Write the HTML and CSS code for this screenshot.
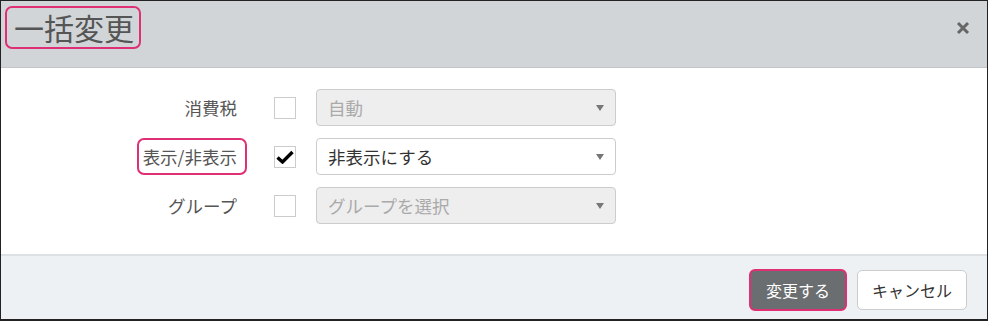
FILE: index.html
```html
<!DOCTYPE html>
<html lang="ja">
  <head>
    <meta charset="UTF-8" />
    <title>一括変更</title>
    <link rel="stylesheet" href="styles.css">
  </head>
  <body>
    <div class="modal">
      <div class="modal-header">
        <h1 class="modal-title mark">一括変更</h1>
        <span class="close">
          <svg width="14" height="14" viewBox="0 0 14 14"><path d="M2 2 L12 12 M12 2 L2 12" stroke="#666" stroke-width="3" fill="none"/></svg>
        </span>
      </div>

      <div class="modal-body">
        <div class="form-row">
          <div class="label"><span>消費税</span></div>
          <span class="check"></span>
          <div class="select disabled">自動<span class="arrow"></span></div>
        </div>

        <div class="form-row">
          <div class="label"><span class="mark">表示/非表示</span></div>
          <span class="check checked">
            <svg width="18" height="14" viewBox="0 0 18 14"><path d="M1.5 7.5 L6.5 12 L16.5 2" fill="none" stroke="#000" stroke-width="3.4" stroke-linejoin="miter"/></svg>
          </span>
          <div class="select">非表示にする<span class="arrow"></span></div>
        </div>

        <div class="form-row">
          <div class="label"><span>グループ</span></div>
          <span class="check"></span>
          <div class="select disabled">グループを選択<span class="arrow"></span></div>
        </div>
      </div>

      <div class="modal-footer">
        <button class="btn btn-primary mark">変更する</button>
        <button class="btn">キャンセル</button>
      </div>
    </div>
  </body>
</html>
```

FILE: styles.css
```css
html, body {
  margin: 0;
  padding: 0;
}

body {
  font-family: "Noto Sans CJK JP", "Noto Sans", sans-serif;
  color: #555;
}

.modal {
  width: 988px;
  height: 321px;
  box-sizing: border-box;
  border: 1px solid #222;
  border-bottom-width: 2px;
  display: flex;
  flex-direction: column;
}

.modal-header {
  height: 66px;
  background-color: #d1d5d8;
  border-bottom: 1px solid #c2c6ca;
  display: flex;
  align-items: flex-start;
  justify-content: space-between;
  padding: 0 17px 0 4px;
}

.modal-title {
  margin: 5px 0 0 0;
  font-size: 30px;
  font-weight: normal;
  line-height: 39px;
  padding: 0 5px 0 7px;
  color: #555;
}

.mark {
  border: 2px solid #df2f75;
  border-radius: 7px;
}

.close {
  margin-top: 20px;
  line-height: 0;
}

.modal-body {
  flex: 1;
  background: #fff;
  padding-top: 21px;
  display: flex;
  flex-direction: column;
  gap: 12px;
}

.form-row {
  display: flex;
  align-items: center;
  height: 37px;
}

.label {
  width: 236px;
  text-align: right;
  font-size: 17.5px;
}

.label span {
  display: inline-block;
  line-height: 33px;
}

.label span.mark {
  padding: 0 8px 0 4px;
  margin-right: -10px;
}

.check {
  width: 20px;
  height: 20px;
  border: 1px solid #ccc;
  margin-left: 37px;
  margin-right: 20px;
  display: flex;
  align-items: center;
  justify-content: center;
  background: #fff;
}

.select {
  width: 300px;
  height: 37px;
  box-sizing: border-box;
  border: 1px solid #ccc;
  border-radius: 4px;
  display: flex;
  align-items: center;
  justify-content: space-between;
  padding: 0 11px 0 11px;
  font-size: 17.5px;
  color: #333;
  background: #fff;
}

.select.disabled {
  background: #eeeeee;
  color: #aaa;
}

.arrow {
  width: 0;
  height: 0;
  border-left: 4px solid transparent;
  border-right: 4px solid transparent;
  border-top: 6px solid #777;
}

.modal-footer {
  height: 65px;
  background: #eef1f4;
  border-top: 2px solid #dde1e4;
  display: flex;
  align-items: center;
  justify-content: flex-end;
  gap: 10px;
  padding-right: 20px;
  padding-top: 4px;
  box-sizing: border-box;
}

.btn {
  font-family: "Noto Sans CJK JP", "Noto Sans", sans-serif;
  font-size: 16px;
  height: 40px;
  padding: 0;
  width: 110px;
  white-space: nowrap;
  box-sizing: border-box;
  background: #fff;
  border: 1px solid #ccc;
  border-radius: 5px;
  color: #333;
}

.btn-primary {
  background: #6b6e70;
  color: #fff;
  border: 2px solid #df2f75;
  height: 42px;
  width: 98px;
  border-radius: 6px;
}
```
